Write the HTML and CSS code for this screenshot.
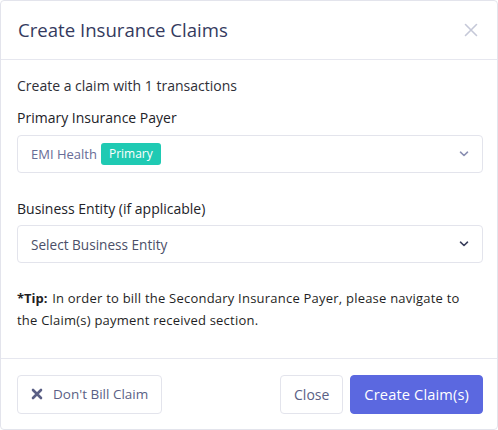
FILE: index.html
```html
<!DOCTYPE html>
<html>
<head>
<meta charset="utf-8">
<link rel="stylesheet" href="styles.css">
</head>
<body>
<div class="modal">
  <div class="modal-header">
    <h1 class="title">Create Insurance Claims</h1>
    <button class="close-x" aria-label="Close">
      <svg width="14" height="14" viewBox="0 0 14 14"><path d="M1.5 1.5L12.5 12.5M12.5 1.5L1.5 12.5" stroke="#c5c8d8" stroke-width="1.6" stroke-linecap="round"/></svg>
    </button>
  </div>
  <div class="modal-body">
    <p class="intro">Create a claim with 1 transactions</p>
    <label class="field-label">Primary Insurance Payer</label>
    <div class="select">
      <span class="select-value">EMI Health <span class="badge">Primary</span></span>
      <svg class="chev" width="10" height="6" viewBox="0 0 10 6"><path d="M1.5 1.2L5 4.5L8.5 1.2" fill="none" stroke="#8a8fb2" stroke-width="1.6" stroke-linecap="round" stroke-linejoin="round"/></svg>
    </div>
    <label class="field-label second">Business Entity (if applicable)</label>
    <div class="select">
      <span class="select-value placeholder">Select Business Entity</span>
      <svg class="chev" width="10" height="6" viewBox="0 0 10 6"><path d="M1.5 1.2L5 4.5L8.5 1.2" fill="none" stroke="#3a3f5c" stroke-width="1.6" stroke-linecap="round" stroke-linejoin="round"/></svg>
    </div>
    <p class="tip"><b class="tip-label">*Tip:</b> <span>In order to bill the Secondary Insurance Payer, please navigate to</span><br><span>the Claim(s) payment received section.</span></p>
  </div>
  <div class="modal-footer">
    <button class="btn btn-outline">
      <svg width="12" height="12" viewBox="0 0 12 12"><path d="M2 2L10 10M10 2L2 10" stroke="#5a5f85" stroke-width="2.6" stroke-linecap="round"/></svg>
      <span>Don't Bill Claim</span>
    </button>
    <div class="footer-right">
      <button class="btn btn-outline btn-close">Close</button>
      <button class="btn btn-primary">Create Claim(s)</button>
    </div>
  </div>
</div>
</body>
</html>
```
FILE: styles.css
```css
* { box-sizing: border-box; }
html, body { margin: 0; padding: 0; background: #fff; }
body { font-family: "Open Sans", "Liberation Sans", sans-serif; }
.modal {
  width: 498px;
  height: 430px;
  border: 1px solid #e3e4ec;
  border-radius: 4px;
  display: flex;
  flex-direction: column;
  background: #fff;
}
.modal-header {
  height: 59px;
  border-bottom: 1px solid #e6e7ef;
  display: flex;
  align-items: center;
  justify-content: space-between;
  padding: 0 19px 0 17px;
}
.title {
  margin: -1px 0 0;
  font-size: 18.6px;
  font-weight: 500;
  color: #343a5e;
}
.close-x {
  border: 0; background: none; padding: 0; display: flex;
}
.modal-body {
  flex: 1;
  padding: 17px 14px 0 16px;
}
.intro {
  margin: 0 0 13px;
  font-size: 14px;
  line-height: 18px;
  color: #2f2f37;
}
.field-label {
  display: block;
  font-size: 14px;
  line-height: 20px;
  color: #222228;
  margin-bottom: 7px;
}
.field-label.second { margin-top: 26px; margin-bottom: 6px; }
.select {
  height: 38px;
  border: 1px solid #e3e4ec;
  border-radius: 4px;
  display: flex;
  align-items: center;
  justify-content: space-between;
  padding: 0 13px 0 13px;
}
.select-value {
  font-size: 13px;
  color: #676c96;
  display: flex;
  align-items: center;
  gap: 4px;
}
.select-value.placeholder { color: #4b4f68; font-size: 13.6px; }
.badge {
  background: #1fcab3;
  color: #fff;
  font-size: 12px;
  line-height: 22px;
  padding: 0 8px;
  border-radius: 3px;
}
.tip {
  margin: 24px 0 0;
  font-size: 13px;
  letter-spacing: 0.22px;
  line-height: 22px;
  color: #1f1f25;
}
.tip-label { font-weight: 700; letter-spacing: 0; margin-right: 1px; }
.modal-footer {
  height: 71px;
  border-top: 1px solid #e6e7ef;
  display: flex;
  align-items: center;
  justify-content: space-between;
  padding: 0 14px 0 16px;
}
.footer-right { display: flex; gap: 7px; }
.btn {
  height: 39px;
  font-family: inherit;
  font-size: 13.5px;
  border-radius: 4px;
  padding: 0 13px;
  display: flex;
  align-items: center;
  gap: 10px;
  cursor: pointer;
}
.btn-outline {
  background: #fff;
  border: 1px solid #e3e4ec;
  color: #5a5f85;
}
.btn-close { font-size: 14px; }
.btn-primary {
  background: #5b68e0;
  border: 1px solid #5b68e0;
  color: #fff;
  font-size: 14.6px;
  letter-spacing: 0.15px;
}
```
